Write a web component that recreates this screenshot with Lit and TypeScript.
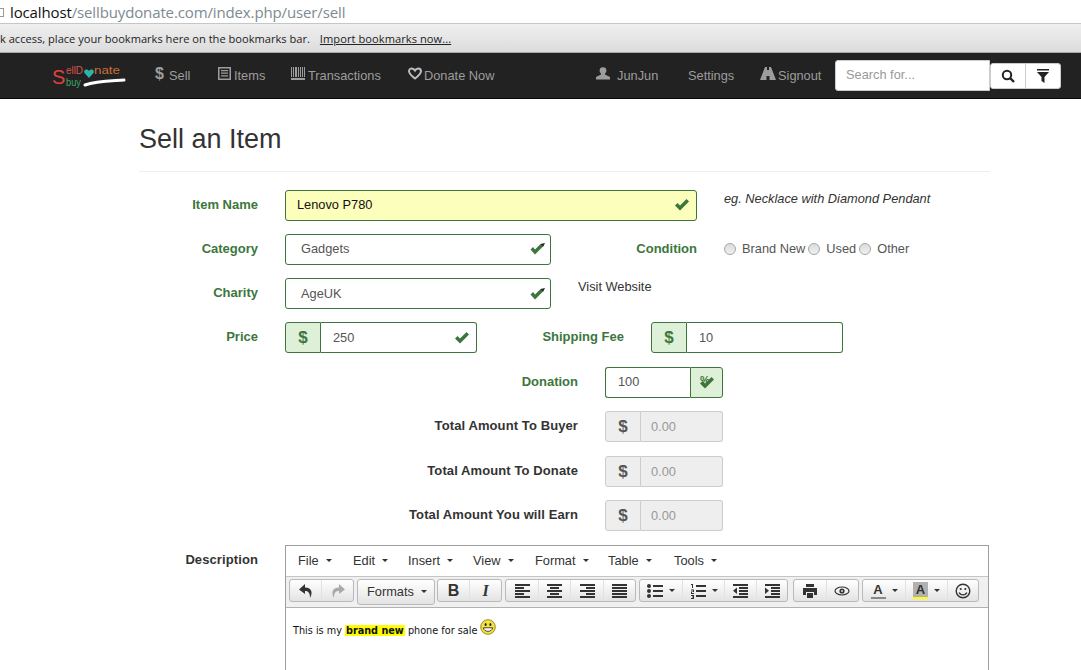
import { LitElement, html, css, svg } from 'lit';
import { customElement } from 'lit/decorators.js';

const okIcon = () => html`<svg class="ok" width="16" height="14" viewBox="0 0 16 14">
  <path d="M1 7.5 L6 12.5 L15 3.5 L12.5 1 L6 7.5 L3.5 5 Z" fill="#3c763d"></path>
</svg>`;

const okDark = html`<svg class="ok" width="16" height="14" viewBox="0 0 16 14">
  <path d="M0.5 7.5 L5 12.5 L13 4.5 L10.5 2 L5 7.5 L3 5 Z" fill="#3c763d"></path>
  <path d="M10.5 2 L15 1 L13 5 Z" fill="#222"></path>
</svg>`;

const caret = html`<i class="caret"></i>`;

const ic = (w: number, h: number, body: unknown) =>
  html`<svg width=${w} height=${h} viewBox="0 0 ${w} ${h}">${body}</svg>`;

const lines = (rows: number[][]) =>
  rows.map(([x, y, w, t]) => svg`<rect x=${x} y=${y} width=${w} height=${t ?? 2} fill="#333"></rect>`);

const icons: Record<string, unknown> = {
  undo: ic(16, 16, svg`<path d="M7 1 L1 6.5 L7 11 V8 C10 8 12 9.5 12 15 C15 10 14 4.5 7 4.5 Z" fill="#333"></path>`),
  redo: ic(16, 16, svg`<path d="M9 1 L15 6.5 L9 11 V8 C6 8 4 9.5 4 15 C1 10 2 4.5 9 4.5 Z" fill="#aaa"></path>`),
  alignLeft: ic(16, 16, lines([[1, 1, 15], [1, 4, 9], [1, 7, 15], [1, 10, 9], [1, 13, 15]])),
  alignCenter: ic(16, 16, lines([[1, 1, 15], [4, 4, 9], [1, 7, 15], [4, 10, 9], [1, 13, 15]])),
  alignRight: ic(16, 16, lines([[1, 1, 15], [7, 4, 9], [1, 7, 15], [7, 10, 9], [1, 13, 15]])),
  justify: ic(16, 16, lines([[1, 1, 15], [1, 4, 15], [1, 7, 15], [1, 10, 15], [1, 13, 15]])),
  bullets: ic(16, 16, svg`<circle cx="2" cy="3" r="2" fill="#333"></circle><circle cx="2" cy="8" r="2" fill="#333"></circle><circle cx="2" cy="13" r="2" fill="#333"></circle>${lines([[6, 2, 10], [6, 7, 10], [6, 12, 10]])}`),
  numbers: ic(16, 16, svg`<path d="M1 1 H3 V5 H2 V2 H1 Z M1 6.5 H4 V9 H2 V10 H4 V11 H1 V8.5 H3 V7.5 H1 Z M1 12 H4 V16 H1 V15 H3 V14.5 H2 V13.5 H3 V13 H1 Z" fill="#333"></path>${lines([[6, 2, 10], [6, 7, 10], [6, 12, 10]])}`),
  outdent: ic(16, 16, svg`${lines([[1, 1, 15], [7, 4, 9], [7, 7, 9], [7, 10, 9], [1, 13, 15]])}<path d="M5 4.5 V11 L1 7.7 Z" fill="#333"></path>`),
  indent: ic(16, 16, svg`${lines([[1, 1, 15], [7, 4, 9], [7, 7, 9], [7, 10, 9], [1, 13, 15]])}<path d="M1 4.5 V11 L5 7.7 Z" fill="#333"></path>`),
  print: ic(16, 16, svg`<path d="M4 1 H12 V4 H4 Z M1 5 H15 V12 H12 V9 H4 V12 H1 Z M5 10 H11 V15 H5 Z" fill="#333"></path>`),
  eye: ic(16, 16, svg`<ellipse cx="8" cy="8" rx="7" ry="4" fill="none" stroke="#333" stroke-width="1.2"></ellipse><circle cx="8" cy="8" r="2.6" fill="#333"></circle><circle cx="8" cy="8" r="1" fill="#ddd"></circle>`),
  smile: ic(16, 16, svg`<circle cx="8" cy="8" r="6.8" fill="none" stroke="#333" stroke-width="1.4"></circle><circle cx="5.7" cy="6" r="1.1" fill="#333"></circle><circle cx="10.3" cy="6" r="1.1" fill="#333"></circle><path d="M4.2 9.5 C5.5 12.6 10.5 12.6 11.8 9.5" fill="none" stroke="#333" stroke-width="1.3"></path>`),
};

const navIcons: Record<string, unknown> = {
  dollar: html`<span class="nav-dollar">$</span>`,
  list: ic(14, 14, svg`<path fill-rule="evenodd" d="M0 0 H13 V13 H0 Z M1.5 1.5 V11.5 H11.5 V1.5 Z" fill="#9d9d9d"></path><path d="M3 3 H10 V4.2 H3 Z M3 5.6 H10 V6.8 H3 Z M3 8.2 H10 V9.4 H3 Z" fill="#9d9d9d"></path>`),
  barcode: ic(14, 14, svg`<path d="M0 0 H1 V10 H0 Z M2 0 H3 V10 H2 Z M4 0 H6 V10 H4 Z M7 0 H8 V10 H7 Z M9 0 H10 V10 H9 Z M11 0 H12 V10 H11 Z M13 0 H14 V10 H13 Z M0 11 H14 V13 H0 Z" fill="#9d9d9d"></path>`),
  heart: ic(14, 14, svg`<path d="M7 11.5 C2 7.5 1 6 1 4.2 C1 2.4 2.4 1.4 3.8 1.4 C5.2 1.4 6.3 2.2 7 3.5 C7.7 2.2 8.8 1.4 10.2 1.4 C11.6 1.4 13 2.4 13 4.2 C13 6 12 7.5 7 11.5 Z" fill="none" stroke="#bdbdbd" stroke-width="2"></path>`),
  user: ic(14, 14, svg`<circle cx="7" cy="3.6" r="3.4" fill="#9d9d9d"></circle><path d="M5 5.5 H9 V7.5 L14 10 V12.5 H0 V10 L5 7.5 Z" fill="#9d9d9d"></path>`),
  road: ic(16, 14, svg`<path d="M5 0 H7 V3 H9 V0 H11 L16 13 H9.5 V9 H6.5 V13 H0 Z" fill="#9d9d9d"></path><path d="M7 4.5 H9 V7.5 H7 Z" fill="#9d9d9d"></path>`),
};

@customElement('app-root')
export class AppRoot extends LitElement {
  static styles = css`
    :host {
      display: block;
      height: 670px;
      overflow: hidden;
      background: #fff;
      font-family: 'Liberation Sans', Arial, sans-serif;
      font-size: 12.8px;
      color: #333;
    }
    * { box-sizing: border-box; }
    svg { display: block; flex: none; }

    .url {
      height: 24px;
      display: flex;
      align-items: center;
      gap: 6px;
      border-bottom: 1px solid #c6c6c6;
      font-family: 'Open Sans', sans-serif;
      font-size: 15px;
      letter-spacing: -0.13px;
      color: #7d8a91;
    }
    .url b { font-weight: 400; color: #111; }
    .lock { width: 5px; height: 9px; margin-left: -1px; border: 1px solid #999; border-left: 0; margin-top: 2px; }
    .bookmarks {
      height: 29px;
      display: flex;
      align-items: center;
      gap: 10px;
      background: linear-gradient(#efefef, #dcdcdc);
      border-bottom: 1px solid #a9a9a9;
      font-family: 'Open Sans', sans-serif;
      font-size: 11.1px;
      color: #222;
      white-space: nowrap;
    }
    .bookmarks u { color: #222; letter-spacing: 0.06px; }

    .nav {
      height: 46px;
      background: #222;
      border-bottom: 1px solid #080808;
      display: flex;
      align-items: center;
      color: #9d9d9d;
      padding-left: 52px;
    }
    .logo { width: 74px; height: 26px; flex: none; margin-right: 29px; }
    .nav-item { display: flex; align-items: center; gap: 2px; white-space: nowrap; }
    .nav-item svg { margin-top: -3px; }
    .nav-dollar { font-size: 16px; font-weight: 700; color: #9d9d9d; width: 12px; margin-top: -4px; }
    .sell { width: 63px; }
    .items { width: 73px; }
    .trans { width: 117px; gap: 3px; }
    .donate { width: 188px; }
    .user { width: 92px; gap: 7px; }
    .settings { width: 72px; }
    .signout { width: 75px; }
    .search {
      width: 155px;
      height: 31px;
      padding: 0 10px 3px;
      display: flex;
      align-items: center;
      background: #fff;
      border: 1px solid #ccc;
      border-radius: 3px 0 0 3px;
      color: #999;
      flex: none;
    }
    .nav-btn {
      width: 36px;
      height: 26px;
      margin-left: -1px;
      background: #fff;
      border: 1px solid #ccc;
      border-radius: 0 3px 3px 0;
      display: flex;
      align-items: center;
      justify-content: center;
      flex: none;
    }
    .nav-btn.first { margin-left: 0; border-radius: 3px 0 0 3px; }

    .page { padding: 0 91px 0 139px; }
    h1 {
      margin: 0;
      padding: 25px 0 15px;
      height: 73px;
      font-size: 27px;
      font-weight: 400;
      line-height: 30px;
      color: #333;
      border-bottom: 1px solid #eee;
    }
    form { display: block; padding-top: 18px; }
    .row { display: flex; height: 31px; margin-bottom: 13px; }
    .row.wide { margin-bottom: 14px; }
    .label {
      font-weight: 700;
      font-size: 13px;
      color: #3c763d;
      text-align: right;
      padding-top: 7px;
      line-height: 16px;
      flex: none;
    }
    .label.plain { color: #333; letter-spacing: 0.1px; }
    .main-label { width: 119px; margin-right: 27px; }
    .center-label { width: 439px; margin-right: 27px; }

    .input {
      height: 31px;
      flex: none;
      display: flex;
      align-items: center;
      justify-content: space-between;
      background: #fff;
      border: 1px solid #3c763d;
      border-radius: 3px;
      color: #555;
      padding: 0 12px 0 15px;
    }
    .input.name { width: 412px; background: #fcffbb; color: #111; padding: 0 6px 2px 11px; }
    .input.select { width: 266px; padding-left: 15px; padding-right: 4px; }
    .input.up { padding-bottom: 2px; }
    .group { display: flex; flex: none; height: 31px; }
    .addon {
      width: 36px;
      height: 31px;
      flex: none;
      display: flex;
      align-items: center;
      justify-content: center;
      background: #dff0d8;
      border: 1px solid #3c763d;
      border-radius: 3px 0 0 3px;
      color: #3c763d;
      font-size: 17px;
      font-weight: 700;
    }
    .group .input { border-left: 0; border-radius: 0 3px 3px 0; padding-left: 12px; padding-right: 6px; }
    .price { width: 156px; }
    .ship { width: 156px; }

    .donation .input { width: 85px; border-left: 1px solid #3c763d; border-right: 0; border-radius: 3px 0 0 3px; padding: 0 12px 2px; }
    .donation .addon { width: 33px; border-radius: 0 3px 3px 0; position: relative; }
    .percent { position: absolute; left: 9px; top: 6px; font-size: 11px; font-weight: 700; color: #3c763d; }

    .muted .addon { background: #eee; border-color: #ccc; color: #555; }
    .muted .input { width: 82px; background: #eee; border-color: #ccc; color: #999; padding-left: 10px; }

    .hint { margin-left: 27px; padding-top: 1px; font-style: italic; color: #333; line-height: 16px; }
    .condition { width: 146px; margin-right: 27px; }
    .radios { display: flex; align-items: center; color: #555; height: 29px; }
    .radio {
      width: 12px;
      height: 12px;
      border-radius: 50%;
      border: 1px solid #a6a6a6;
      background: linear-gradient(#dcdcdc, #f0f0f0);
      flex: none;
      margin-right: 6px;
    }
    .radios span { margin-right: 3px; }
    .visit { margin-left: 27px; padding-top: 1px; line-height: 16px; color: #333; }
    .ship-label { width: 147px; margin-right: 27px; }

    .editor {
      width: 704px;
      height: 200px;
      flex: none;
      border: 1px solid #9e9e9e;
    }
    .row.editor-row { height: auto; margin: 0; }
    .menubar {
      height: 31px;
      background: #fff;
      display: flex;
      align-items: center;
      padding: 0 0 1px 12px;
      border-bottom: 1px solid #c5c5c5;
      color: #333;
    }
    .menu { display: flex; align-items: center; gap: 7px; }
    .caret {
      display: inline-block;
      width: 0;
      height: 0;
      border-left: 3px solid transparent;
      border-right: 3px solid transparent;
      border-top: 3px solid #333;
      flex: none;
    }
    .toolbar {
      height: 31px;
      background: #f0f0f0;
      border-bottom: 1px solid #b1b1b1;
      display: flex;
      align-items: flex-start;
      padding: 2px 0 0 3px;
      gap: 3px;
    }
    .tgroup {
      display: flex;
      height: 23px;
      flex: none;
      border: 1px solid #b9b9b9;
      border-radius: 3px;
      background: linear-gradient(#fff, #e3e3e3);
    }
    .w65 { width: 65px; }
    .w66 { width: 66px; margin-left: 2px; }
    .w131 { width: 131px; }
    .w149 { width: 149px; }
    .w117 { width: 117px; }
    .tight { margin-left: -1px; }
    .tgroup.formats { height: 26px; width: 78px; align-items: center; padding: 0 0 2px 9px; gap: 7px; color: #333; }
    .tbtn {
      display: flex;
      align-items: center;
      justify-content: center;
      gap: 7px;
      flex: 1 1 0;
      min-width: 0;
      border-left: 1px solid #e2e2e2;
    }
    .tbtn:first-child { border-left: 0; }
    .tbtn.split { flex: 0 0 42px; gap: 6px; }
    .tbtn b, .tbtn em { font-size: 16px; color: #333; font-family: 'Liberation Serif', serif; }
    .tbtn b { font-family: 'Liberation Sans', sans-serif; }
    .tbtn em { font-weight: 700; }
    .color-a {
      width: 15px;
      height: 17px;
      display: flex;
      justify-content: center;
      font-size: 13px;
      font-weight: 700;
      line-height: 15px;
      color: #333;
      border-bottom: 2px solid #888;
    }
    .color-a.bg { background: #b1b1b1; border-bottom-color: #ffff00; }
    .content {
      padding: 9px 7px;
      font-family: 'DejaVu Sans', Verdana, sans-serif;
      font-size: 9.7px;
      color: #111;
      display: flex;
      align-items: flex-start;
      white-space: pre;
    }
    .content p { margin: 8px 0 0; line-height: 12px; }
    .content mark { background: #ffff00; font-weight: 700; color: #111; padding: 0 1px; }
    .emoji { margin: 2px 0 0 3px; }
  `;

  private logo() {
    return html`<svg class="logo" viewBox="0 0 74 26">
      <text x="0" y="21" font-family="Liberation Sans" font-size="20" fill="#e0413f">S</text>
      <text x="14" y="11" font-family="Liberation Sans" font-size="10" fill="#d8564a" textLength="17" lengthAdjust="spacingAndGlyphs">ellD</text>
      <path d="M37 15 L32.5 10 C31 7 35 5 37 8 C39 5 43 7 41.5 10 Z" fill="#2fb3a8"></path>
      <text x="42" y="11" font-family="Liberation Sans" font-size="10" fill="#c9703a" textLength="26" lengthAdjust="spacingAndGlyphs">nate</text>
      <text x="14" y="23" font-family="Liberation Sans" font-size="10" fill="#35a866" textLength="15" lengthAdjust="spacingAndGlyphs">buy</text>
      <path d="M33 22 C44 18 58 18 72 17" fill="none" stroke="#fff" stroke-width="3" stroke-linecap="round"></path>
    </svg>`;
  }

  private menu() {
    const items: [string, number][] = [
      ['File', 55], ['Edit', 55], ['Insert', 65], ['View', 62], ['Format', 73], ['Table', 66], ['Tools', 60],
    ];
    return items.map(([name, w]) => html`<div class="menu" style="width:${w}px">${name}${caret}</div>`);
  }

  private tbtn(icon: unknown, split = false) {
    return html`<div class="tbtn ${split ? 'split' : ''}">${icon}${split ? caret : ''}</div>`;
  }

  render() {
    return html`
      <div class="url"><span class="lock"></span><span><b>localhost</b>/sellbuydonate.com/index.php/user/sell</span></div>
      <div class="bookmarks"><span>k access, place your bookmarks here on the bookmarks bar.</span><u>Import bookmarks now...</u></div>

      <nav class="nav">
        ${this.logo()}
        <div class="nav-item sell">${navIcons.dollar}Sell</div>
        <div class="nav-item items">${navIcons.list}Items</div>
        <div class="nav-item trans">${navIcons.barcode}Transactions</div>
        <div class="nav-item donate">${navIcons.heart}Donate Now</div>
        <div class="nav-item user">${navIcons.user}JunJun</div>
        <div class="nav-item settings">Settings</div>
        <div class="nav-item signout">${navIcons.road}Signout</div>
        <div class="search">Search for...</div>
        <div class="nav-btn first">
          <svg width="14" height="14" viewBox="0 0 14 14"><circle cx="6" cy="6" r="4.2" fill="none" stroke="#222" stroke-width="2"></circle><path d="M9 9 L13 13" stroke="#222" stroke-width="2.4"></path></svg>
        </div>
        <div class="nav-btn">
          <svg width="14" height="14" viewBox="0 0 14 14"><path d="M1 0 H13 V1.5 H1 Z M1 3 H13 L8.5 8 V14 L5.5 12 V8 Z" fill="#222"></path></svg>
        </div>
      </nav>

      <div class="page">
        <h1>Sell an Item</h1>
        <form>
          <div class="row">
            <div class="label main-label">Item Name</div>
            <div class="input name">Lenovo P780${okIcon()}</div>
            <div class="hint">eg. Necklace with Diamond Pendant</div>
          </div>
          <div class="row">
            <div class="label main-label">Category</div>
            <div class="input select up">Gadgets${okDark}</div>
            <div class="label condition">Condition</div>
            <div class="radios">
              <i class="radio"></i><span>Brand New</span>
              <i class="radio"></i><span>Used</span>
              <i class="radio"></i><span>Other</span>
            </div>
          </div>
          <div class="row">
            <div class="label main-label">Charity</div>
            <div class="input select">AgeUK${okDark}</div>
            <div class="visit">Visit Website</div>
          </div>
          <div class="row wide">
            <div class="label main-label">Price</div>
            <div class="group">
              <div class="addon">$</div>
              <div class="input price">250${okIcon()}</div>
            </div>
            <div class="label ship-label">Shipping Fee</div>
            <div class="group">
              <div class="addon">$</div>
              <div class="input ship">10</div>
            </div>
          </div>
          <div class="row">
            <div class="label center-label">Donation</div>
            <div class="group donation">
              <div class="input">100</div>
              <div class="addon"><span class="percent">%</span>${okIcon()}</div>
            </div>
          </div>
          <div class="row wide">
            <div class="label plain center-label">Total Amount To Buyer</div>
            <div class="group muted"><div class="addon">$</div><div class="input">0.00</div></div>
          </div>
          <div class="row">
            <div class="label plain center-label">Total Amount To Donate</div>
            <div class="group muted"><div class="addon">$</div><div class="input">0.00</div></div>
          </div>
          <div class="row wide">
            <div class="label plain center-label">Total Amount You will Earn</div>
            <div class="group muted"><div class="addon">$</div><div class="input">0.00</div></div>
          </div>
          <div class="row editor-row">
            <div class="label plain main-label">Description</div>
            <div class="editor">
              <div class="menubar">${this.menu()}</div>
              <div class="toolbar">
                <div class="tgroup w65">${this.tbtn(icons.undo)}${this.tbtn(icons.redo)}</div>
                <div class="tgroup formats">Formats${caret}</div>
                <div class="tgroup w65 tight">${this.tbtn(html`<b>B</b>`)}${this.tbtn(html`<em>I</em>`)}</div>
                <div class="tgroup w131">
                  ${this.tbtn(icons.alignLeft)}${this.tbtn(icons.alignCenter)}${this.tbtn(icons.alignRight)}${this.tbtn(icons.justify)}
                </div>
                <div class="tgroup w149">
                  ${this.tbtn(icons.bullets, true)}${this.tbtn(icons.numbers, true)}${this.tbtn(icons.outdent)}${this.tbtn(icons.indent)}
                </div>
                <div class="tgroup w66">${this.tbtn(icons.print)}${this.tbtn(icons.eye)}</div>
                <div class="tgroup w117">
                  ${this.tbtn(html`<span class="color-a">A</span>`, true)}
                  ${this.tbtn(html`<span class="color-a bg">A</span>`, true)}
                  ${this.tbtn(icons.smile)}
                </div>
              </div>
              <div class="content">
                <p>This is my <mark>brand new</mark> phone for sale</p>
                <svg class="emoji" width="16" height="16" viewBox="0 0 16 16">
                  <circle cx="8" cy="8" r="7.3" fill="#f5e23c" stroke="#a08a20" stroke-width="1"></circle>
                  <ellipse cx="5.6" cy="5.5" rx="1" ry="1.5" fill="#222"></ellipse>
                  <ellipse cx="10.4" cy="5.5" rx="1" ry="1.5" fill="#222"></ellipse>
                  <path d="M3.3 8.8 H12.7 C12 13.5 4 13.5 3.3 8.8 Z" fill="#fff" stroke="#333" stroke-width="0.9"></path>
                </svg>
              </div>
            </div>
          </div>
        </form>
      </div>
    `;
  }
}
